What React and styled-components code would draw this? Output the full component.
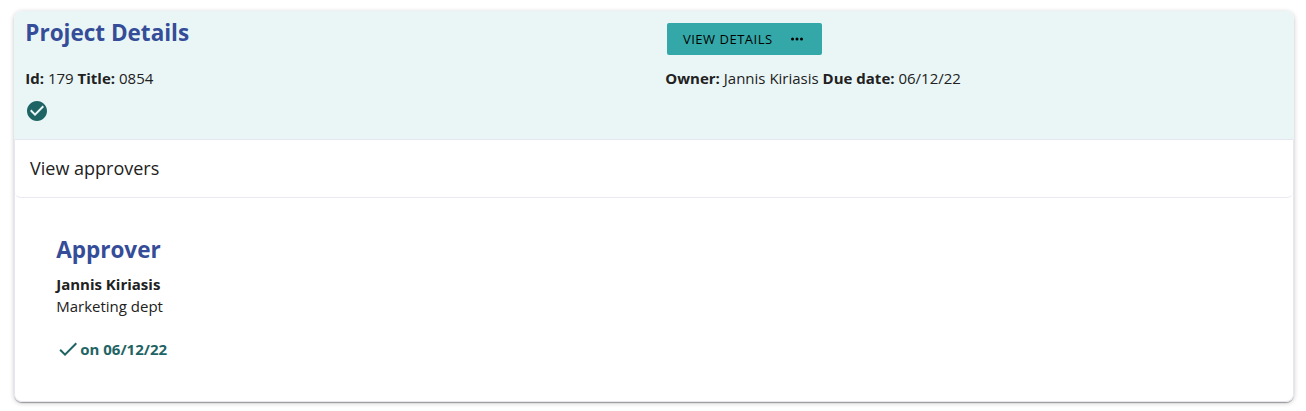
import React from "react";
import styled, { createGlobalStyle } from "styled-components";

const GlobalStyle = createGlobalStyle`
  *, *::before, *::after { box-sizing: border-box; }
  body {
    margin: 0;
    background: #fff;
    color: #212121;
    font-family: "Open Sans", "Noto Sans", sans-serif;
    font-size: 15px;
    line-height: 22px;
  }
`;

const Page = styled.main`
  padding: 11px 12px 9px 14px;
`;

const Card = styled.article`
  width: 1280px;
  height: 391px;
  border-radius: 8px;
  background: #fff;
  overflow: hidden;
  box-shadow: 0 2px 1px -1px rgba(0, 0, 0, 0.2), 0 1px 1px 0 rgba(0, 0, 0, 0.14),
    0 1px 5px 0 rgba(0, 0, 0, 0.22);
`;

const Header = styled.header`
  display: grid;
  grid-template-columns: 640px 1fr;
  height: 128px;
  background: #eaf6f6;
`;

const HeaderColumn = styled.div`
  display: flex;
  flex-direction: column;
  align-items: flex-start;
  padding-left: 11.3px;
`;

const Heading = styled.h2`
  margin: 0;
  color: #354d98;
  font-size: 22.5px;
  line-height: 32px;
  font-weight: 700;
`;

const TitleHeading = styled(Heading)`
  margin-top: 6px;
`;

const Meta = styled.p`
  margin: ${({ $gap }) => $gap}px 0 0;
`;

const ApprovedIcon = styled.svg`
  display: block;
  width: 24px;
  height: 24px;
  margin-top: 10px;
  fill: #1f6464;
`;

const DetailsButton = styled.button`
  display: flex;
  align-items: center;
  width: 155px;
  height: 32px;
  margin: 12px 0 0 1.7px;
  padding: 0 16px;
  border: 0;
  border-radius: 2px;
  background: #34a8a8;
  color: #000;
  font: 400 13px/20px "Open Sans", "Noto Sans", sans-serif;
  letter-spacing: 0.5px;
  text-transform: uppercase;
`;

const MoreIcon = styled.svg`
  width: 16px;
  height: 16px;
  margin-left: 16px;
`;

const Body = styled.div`
  height: 263px;
  border: 1px solid #e6e6f0;
  border-radius: 0 0 8px 8px;
`;

const Toggle = styled.div`
  height: 58px;
  padding: 15px 15px;
  border-bottom: 1px solid #e9e9f2;
  border-radius: 0 0 6px 6px;
  font-size: 18px;
  line-height: 26px;
`;

const Approver = styled.section`
  padding: 36px 41.2px;
`;

const Person = styled.p`
  margin: 7px 0 0;
  font-weight: 700;
`;

const Department = styled.p`
  margin: 0;
`;

const Decision = styled.div`
  display: flex;
  align-items: center;
  margin-top: 20px;
  color: #1f6464;
  font-weight: 700;
`;

const CheckIcon = styled.svg`
  width: 24px;
  height: 24px;
  fill: currentColor;
`;

export default function App() {
  return (
    <>
      <GlobalStyle />
      <Page>
        <Card>
          <Header>
            <HeaderColumn>
              <TitleHeading>Project Details</TitleHeading>
              <Meta $gap={18}>
                <b>Id:</b> 179 <b>Title:</b> 0854
              </Meta>
              <ApprovedIcon viewBox="0 0 24 24" aria-label="Approved">
                <path d="M12 2C6.48 2 2 6.48 2 12s4.48 10 10 10 10-4.48 10-10S17.52 2 12 2zm-2 15l-5-5 1.41-1.41L10 14.17l7.59-7.59L19 8l-9 9z" />
              </ApprovedIcon>
            </HeaderColumn>
            <HeaderColumn>
              <DetailsButton type="button">
                View details
                <MoreIcon viewBox="0 0 16 16" aria-hidden="true">
                  <circle cx="3.5" cy="8" r="1.5" />
                  <circle cx="8" cy="8" r="1.5" />
                  <circle cx="12.5" cy="8" r="1.5" />
                </MoreIcon>
              </DetailsButton>
              <Meta $gap={12}>
                <b>Owner:</b> Jannis Kiriasis <b>Due date:</b> 06/12/22
              </Meta>
            </HeaderColumn>
          </Header>
          <Body>
            <Toggle>View approvers</Toggle>
            <Approver>
              <Heading>Approver</Heading>
              <Person>Jannis Kiriasis</Person>
              <Department>Marketing dept</Department>
              <Decision>
                <CheckIcon viewBox="0 0 24 24" aria-hidden="true">
                  <path d="M9 16.17L4.83 12l-1.42 1.41L9 19 21 7l-1.41-1.41z" />
                </CheckIcon>
                on 06/12/22
              </Decision>
            </Approver>
          </Body>
        </Card>
      </Page>
    </>
  );
}
